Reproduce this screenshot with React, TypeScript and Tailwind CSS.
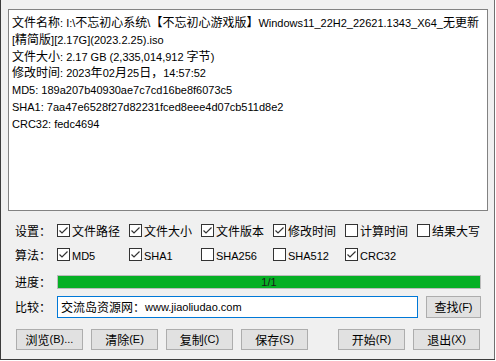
import React from 'react';

const FONT = { fontFamily: '"Noto Sans CJK SC", "Noto Sans", sans-serif' };

// latin runs use an Arial-width face at 11px, CJK runs stay at 12px
function T({ s }: { s: string }) {
  const parts = s.split(/([\u3000-\u9fff\uff00-\uffef]+)/).filter(Boolean);
  return (
    <>
      {parts.map((p, i) =>
        /[\u3000-\u9fff\uff00-\uffef]/.test(p) ? (
          <span key={i}>{p}</span>
        ) : (
          <span key={i} className="text-[11px] leading-none font-['Liberation_Sans',sans-serif]">
            {p}
          </span>
        )
      )}
    </>
  );
}

function Box({ checked }: { checked: boolean }) {
  return (
    <span className="w-[13px] h-[13px] border border-[#333333] bg-white flex items-center justify-center shrink-0">
      {checked && (
        <svg width="11" height="11" viewBox="0 0 11 11">
          <path d="M1.5 5.5 L4 8 L9.5 2.5" fill="none" stroke="#333333" strokeWidth="1.2" />
        </svg>
      )}
    </span>
  );
}

function Check({ label, checked }: { label: string; checked: boolean }) {
  return (
    <div className="w-[72px] flex items-center gap-[2px] shrink-0">
      <Box checked={checked} />
      <span className="whitespace-nowrap">
        <T s={label} />
      </span>
    </div>
  );
}

function Btn({ label, className = '' }: { label: string; className?: string }) {
  return (
    <div
      className={`h-[21px] w-[67px] bg-[#e1e1e1] border border-[#adadad] flex items-center justify-center whitespace-nowrap ${className}`}
    >
      <T s={label} />
    </div>
  );
}

const SETTINGS = [
  ['文件路径', true],
  ['文件大小', true],
  ['文件版本', true],
  ['修改时间', true],
  ['计算时间', false],
  ['结果大写', false],
] as const;

const ALGOS = [
  ['MD5', true],
  ['SHA1', true],
  ['SHA256', false],
  ['SHA512', false],
  ['CRC32', true],
] as const;

const LINES = [
  '文件名称: I:\\不忘初心系统\\【不忘初心游戏版】Windows11_22H2_22621.1343_X64_无更新',
  '[精简版][2.17G](2023.2.25).iso',
  '文件大小: 2.17 GB (2,335,014,912 字节)',
  '修改时间: 2023年02月25日，14:57:52',
  'MD5: 189a207b40930ae7c7cd16be8f6073c5',
  'SHA1: 7aa47e6528f27d82231fced8eee4d07cb511d8e2',
  'CRC32: fedc4694',
];

export default function App() {
  return (
    <div className="w-[496px] h-[361px] bg-white text-[12px] text-black" style={FONT}>
      <div className="w-[495px] h-[360px] bg-[#f0f0f0] border-l border-b border-[#3c3c3c] flex flex-col relative">
        <div className="absolute right-0 top-0 bottom-0 w-px bg-[#707070]" />

        {/* result box */}
        <div className="ml-[7px] mt-[9px] w-[480px] h-[202px] bg-white border border-[#828282] pl-[3px] pt-[4px] leading-[16.8px] whitespace-nowrap overflow-hidden">
          {LINES.map((l) => (
            <div key={l} className="h-[16.8px]">
              <T s={l} />
            </div>
          ))}
        </div>

        {/* settings */}
        <div className="flex items-center mt-[13px] h-[13px]">
          <span className="ml-[14px] w-[42px] whitespace-nowrap">设置：</span>
          {SETTINGS.map(([l, c]) => (
            <Check key={l} label={l} checked={c} />
          ))}
        </div>

        {/* algorithms */}
        <div className="flex items-center mt-[11px] h-[13px]">
          <span className="ml-[14px] w-[42px] whitespace-nowrap">算法：</span>
          {ALGOS.map(([l, c]) => (
            <Check key={l} label={l} checked={c} />
          ))}
        </div>

        {/* progress */}
        <div className="flex items-center mt-[14px] h-[14px]">
          <span className="ml-[14px] w-[42px] whitespace-nowrap">进度：</span>
          <div className="w-[424px] h-[14px] border border-[#bcbcbc] bg-[#e6e6e6] relative">
            <div className="absolute inset-0 bg-[#06b025]" />
            <span className="absolute inset-0 flex items-center justify-center leading-none text-[#1a1a1a]">
              <T s="1/1" />
            </span>
          </div>
        </div>

        {/* compare */}
        <div className="flex items-center mt-[7px] h-[22px]">
          <span className="ml-[14px] w-[42px] whitespace-nowrap">比较：</span>
          <div className="w-[361px] h-[22px] border border-[#0078d7] bg-white flex items-center pl-[3px] whitespace-nowrap">
            <T s="交流岛资源网：www.jiaoliudao.com" />
          </div>
          <div className="ml-[8px] w-[55px] h-[22px] bg-[#e1e1e1] border border-[#adadad] flex items-center justify-center whitespace-nowrap">
            <T s="查找(F)" />
          </div>
        </div>

        {/* buttons */}
        <div className="flex items-center mt-[11px] pl-[15px]">
          <Btn label="浏览(B)..." />
          <Btn label="清除(E)" className="ml-[8px]" />
          <Btn label="复制(C)" className="ml-[8px]" />
          <Btn label="保存(S)" className="ml-[8px]" />
          <Btn label="开始(R)" className="ml-[30px]" />
          <Btn label="退出(X)" className="ml-[8px]" />
        </div>
      </div>
    </div>
  );
}
